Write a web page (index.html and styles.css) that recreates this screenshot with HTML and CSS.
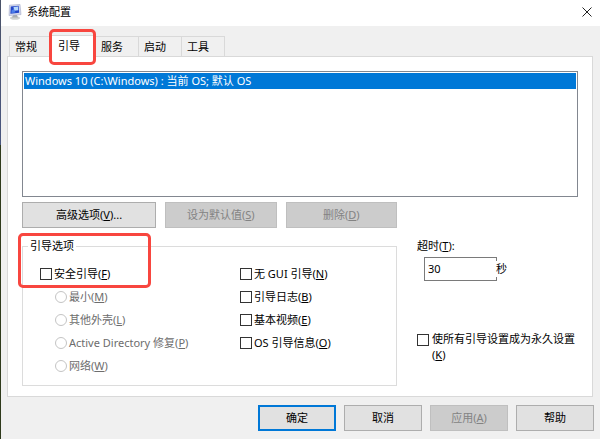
FILE: index.html
```
<!DOCTYPE html>
<html lang="zh-CN">
<head>
  <meta charset="UTF-8">
  <meta name="viewport" content="width=device-width, initial-scale=1.0">
  <title>系统配置</title>
  <link rel="stylesheet" href="styles.css">
</head>
<body>
  <div class="window">
    <header class="titlebar">
      <svg class="app-icon" width="16" height="16" viewBox="0 0 16 16">
        <ellipse cx="8" cy="14" rx="5" ry="1.8" fill="#cfd2d0"/>
        <path d="M6 11h4l1 2.500H5z" fill="#a9aeb0"/>
        <path d="M2.500 1.200l10.500 -.8 1 10.200 -12 1z" fill="#d3d8ec" stroke="#a5abca" stroke-width=".6"/>
        <path d="M3.800 2.400l7.800 -.6 .6 7 -8.800 .9z" fill="#2346c8"/>
        <path d="M6.500 3l4.500 -.4 .3 3.600 -4.200 .6z" fill="#b5d8fb"/>
        <path d="M4.500 6.500l2.500 -1.500 1.500 3.500 -4 .5z" fill="#4d80ea"/>
      </svg>
      <h1>系统配置</h1>
      <button class="close" type="button" aria-label="关闭">
        <svg width="10" height="10" viewBox="0 0 10 10"><path d="M.5 .5l9 9M9.500 .5l-9 9" stroke="#222" fill="none"/></svg>
      </button>
    </header>

    <main class="content">
      <nav class="tabs" role="tablist">
        <button class="tab" type="button" role="tab">常规</button>
        <button class="tab active" type="button" role="tab" aria-selected="true">引导<span class="mark mark-tab"></span></button>
        <button class="tab" type="button" role="tab">服务</button>
        <button class="tab" type="button" role="tab">启动</button>
        <button class="tab" type="button" role="tab">工具</button>
      </nav>

      <section class="panel">
        <ul class="boot-list">
          <li class="selected">Windows 10 (C:\Windows) : 当前 OS; 默认 OS</li>
        </ul>

        <div class="columns">
          <div class="left">
            <div class="actions">
              <button class="btn wide" type="button">高级选项(<u>V</u>)...</button>
              <button class="btn" type="button" disabled>设为默认值(<u>S</u>)</button>
              <button class="btn" type="button" disabled>删除(<u>D</u>)</button>
            </div>

            <div class="group" role="group" aria-labelledby="groupTitle">
              <span class="group-title" id="groupTitle">引导选项</span>
              <div class="options">
                <label class="option"><input type="checkbox"><span>安全引导(<u>F</u>)</span></label>
                <label class="option sub"><input type="radio" name="safe" disabled><span>最小(<u>M</u>)</span></label>
                <label class="option sub"><input type="radio" name="safe" disabled><span>其他外壳(<u>L</u>)</span></label>
                <label class="option sub"><input type="radio" name="safe" disabled><span>Active Directory 修复(<u>P</u>)</span></label>
                <label class="option sub"><input type="radio" name="safe" disabled><span>网络(<u>W</u>)</span></label>
              </div>
              <div class="options">
                <label class="option"><input type="checkbox"><span>无 GUI 引导(<u>N</u>)</span></label>
                <label class="option"><input type="checkbox"><span>引导日志(<u>B</u>)</span></label>
                <label class="option"><input type="checkbox"><span>基本视频(<u>E</u>)</span></label>
                <label class="option"><input type="checkbox"><span>OS 引导信息(<u>O</u>)</span></label>
              </div>
              <span class="mark mark-group"></span>
            </div>
          </div>

          <div class="right">
            <label class="timeout-label" for="timeout">超时(<u>T</u>):</label>
            <div class="timeout">
              <input type="text" id="timeout" value="30">
              <span class="unit">秒</span>
            </div>
            <label class="option permanent"><input type="checkbox"><span>使所有引导设置成为永久设置(<u>K</u>)</span></label>
          </div>
        </div>
      </section>
    </main>

    <footer class="footer">
      <button class="btn primary" type="button">确定</button>
      <button class="btn" type="button">取消</button>
      <button class="btn" type="button" disabled>应用(<u>A</u>)</button>
      <button class="btn" type="button">帮助</button>
    </footer>
  </div>
</body>
</html>
```
FILE: styles.css
```
* {
  box-sizing: border-box;
}

body {
  margin: 0;
  background: #f0f0f0;
  color: #000;
  font-family: "Noto Sans", "Noto Sans CJK SC", sans-serif;
  font-size: 11px;
  line-height: 16px;
}

button, input {
  font: inherit;
  color: inherit;
}

u {
  text-underline-offset: 1px;
}

.window {
  min-height: 100vh;
  padding-left: 1px;
  background: linear-gradient(#4a5268, #4a5780 33%, #2f3a1c 33%, #2f3a1c) left / 1px 100% no-repeat;
}

.titlebar {
  display: flex;
  align-items: center;
  gap: 4px;
  height: 26px;
  padding: 0 8px 2px 6px;
  background: #fff;
}

.titlebar h1 {
  flex: 1;
  margin: 0;
  font-size: 11px;
  font-weight: 400;
}

.close {
  display: flex;
  padding: 0;
  border: 0;
  background: none;
}

.content {
  padding: 9px 7px 0 6px;
}

.tabs {
  display: flex;
  align-items: flex-end;
  padding-left: 2px;
}

.tab {
  height: 20px;
  padding: 0 10px;
  border: 1px solid #d9d9d9;
  border-width: 1px 1px 0 0;
  background: #f0f0f0;
}

.tab:first-child {
  padding: 0 13px 0 5px;
  border-left-width: 1px;
}

.tab.active {
  position: relative;
  height: 22px;
  margin-bottom: -1px;
  padding: 0 15px 2px 7px;
  background: #fff;
}

.tab.active + .tab {
  padding: 0 15px 0 5px;
}

.tab.active + .tab ~ .tab {
  padding: 0 15px 0 5px;
}

.mark {
  position: absolute;
  border: 3px solid #f8463f;
  border-radius: 5px;
  pointer-events: none;
}

.mark-tab {
  inset: -7px -1px -8px -2px;
}

.mark-group {
  top: -14px;
  left: -5px;
  width: 133px;
  height: 55px;
}

.panel {
  padding: 14px 14px 10px;
  border: 1px solid #d9d9d9;
  background: #fff;
}

.boot-list {
  height: 126px;
  margin: 0 0 5px;
  padding: 1px;
  border: 1px solid #828790;
  list-style: none;
}

.boot-list .selected {
  padding-left: 1px;
  background: #0078d7;
  color: #fff;
}

.columns {
  display: flex;
  gap: 20px;
}

.left {
  flex: 0 1 375px;
}

.right {
  flex: 1;
  padding-top: 36px;
}

.actions {
  display: flex;
  gap: 9px;
}

.actions .btn {
  flex: 111;
}

.actions .wide {
  flex: 134;
}

.btn {
  height: 26px;
  padding: 0 0 1px;
  border: 1px solid #adadad;
  background: #e1e1e1;
  text-align: center;
}

.btn:disabled {
  border-color: #bfbfbf;
  background: #ccc;
  color: #838383;
}

.btn.primary {
  border: 2px solid #0078d7;
}

.group {
  position: relative;
  display: grid;
  grid-template-columns: 200px 1fr;
  height: 140px;
  margin-top: 18px;
  padding: 15px 0 0 17px;
  border: 1px solid #dcdcdc;
}

.group-title {
  position: absolute;
  top: -9px;
  left: 5px;
  padding: 0 2px;
  background: #fff;
}

.option {
  display: flex;
  align-items: center;
  gap: 2px;
  height: 23px;
}

.option.sub {
  padding-left: 15px;
  color: #6d6d6d;
}

.option input {
  flex: none;
  appearance: none;
  width: 12px;
  height: 12px;
  margin: 0;
  border: 1px solid #333;
  background: #fff;
}

.option input:checked {
  background: #0078d7;
}

.option input[type="radio"] {
  border-color: #c4c4c4;
  border-radius: 50%;
}

.timeout-label {
  display: block;
}

.timeout {
  display: flex;
  align-items: center;
  margin: 3px 0 0 7px;
}

.timeout input {
  width: 73px;
  height: 24px;
  padding: 0 3px 2px;
  border: 1px solid #7a7a7a;
  background: #fff;
}

/* the unit label overlaps the box edge */
.unit {
  position: relative;
  margin-left: -1px;
  background: #fff;
}

.permanent {
  align-items: flex-start;
  height: auto;
  gap: 3px;
  margin-top: 50px;
}

.permanent input {
  margin-top: 3px;
}

.footer {
  display: flex;
  justify-content: flex-end;
  gap: 8px;
  padding: 8px 6px;
}

.footer .btn {
  width: 78px;
}
```
